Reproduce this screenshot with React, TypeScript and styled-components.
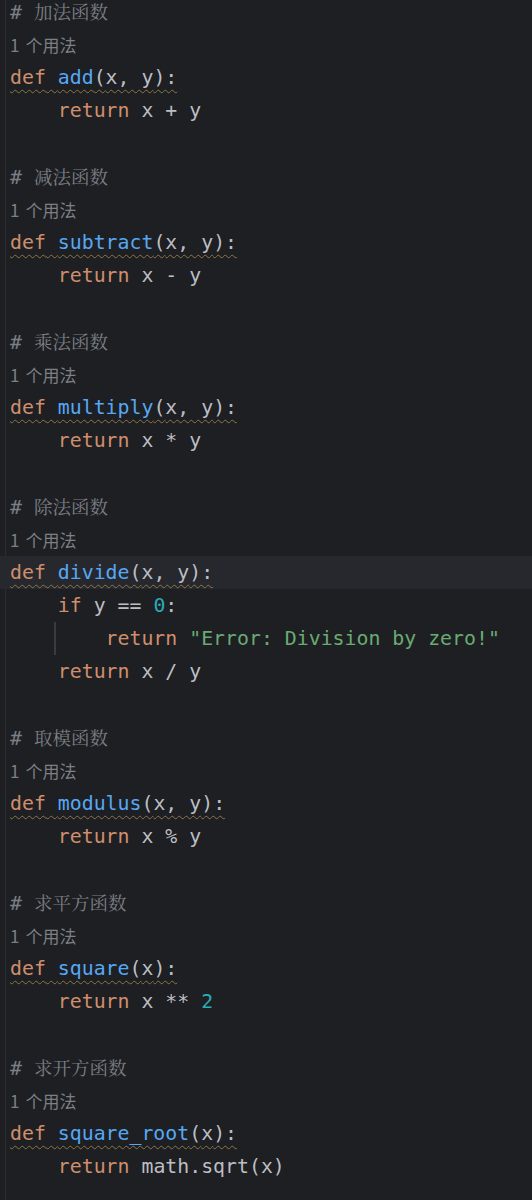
import React from "react";
import styled, { createGlobalStyle } from "styled-components";

const Global = createGlobalStyle`
  html, body { margin: 0; padding: 0; background: #1e1f22; }
  body { overflow: hidden; }
`;

const Editor = styled.div`
  margin-top: -5px;
  width: 532px;
  height: 1210px;
  background: linear-gradient(to right, transparent 5px, #2b2d30 5px, #2b2d30 6px, transparent 6px), #1e1f22;
  font-family: "DejaVu Sans Mono", "Liberation Mono", monospace;
  font-size: 19.85px;
  color: #bcbec4;
`;

const Row = styled.div<{ $current?: boolean }>`
  position: relative;
  height: 33px;
  line-height: 33px;
  padding-left: 10px;
  white-space: pre;
  background: ${(p) => (p.$current ? "#26282e" : "transparent")};
`;

const IndentGuide = styled.span`
  position: absolute;
  left: 54px;
  top: 0;
  bottom: 0;
  width: 2px;
  background: #393b40;
`;

const Kw = styled.span`
  color: #cf8e6d;
`;
const Fn = styled.span`
  color: #56a8f5;
`;
const Num = styled.span`
  color: #2aacb8;
`;
const Str = styled.span`
  color: #6aab73;
`;

const Warn = styled.span`
  text-decoration: underline wavy #8a7648;
  text-decoration-thickness: 1px;
  text-underline-offset: 5px;
  text-decoration-skip-ink: none;
`;

const Comment = styled.span`
  color: #7a7e85;
`;

const CjkComment = styled.span`
  font-family: "Noto Serif CJK SC", "Noto Sans CJK SC", serif;
  font-size: 18.5px;
  color: #7a7e85;
`;

const Hint = styled.span`
  font-family: "Noto Sans CJK SC", "Noto Sans", sans-serif;
  font-size: 17px;
  color: #7c7f86;
`;

const HintCount = styled.span`
  margin-right: 6px;
`;

type Fnc = { comment: string; name: string; args: string; body: React.ReactNode[] };

const funcs: Fnc[] = [
  { comment: "加法函数", name: "add", args: "x, y", body: [<><Kw>    return</Kw> x + y</>] },
  { comment: "减法函数", name: "subtract", args: "x, y", body: [<><Kw>    return</Kw> x - y</>] },
  { comment: "乘法函数", name: "multiply", args: "x, y", body: [<><Kw>    return</Kw> x * y</>] },
  {
    comment: "除法函数",
    name: "divide",
    args: "x, y",
    body: [
      <><Kw>    if</Kw> y == <Num>0</Num>:</>,
      <><IndentGuide /><Kw>        return</Kw> <Str>"Error: Division by zero!"</Str></>,
      <><Kw>    return</Kw> x / y</>,
    ],
  },
  { comment: "取模函数", name: "modulus", args: "x, y", body: [<><Kw>    return</Kw> x % y</>] },
  { comment: "求平方函数", name: "square", args: "x", body: [<><Kw>    return</Kw> x ** <Num>2</Num></>] },
  { comment: "求开方函数", name: "square_root", args: "x", body: [<><Kw>    return</Kw> math.sqrt(x)</>] },
];

export default function App() {
  return (
    <>
      <Global />
      <Editor>
        {funcs.map((f, i) => (
          <React.Fragment key={f.name}>
            {i > 0 && <Row />}
            <Row>
              <Comment># </Comment>
              <CjkComment>{f.comment}</CjkComment>
            </Row>
            <Row>
              <Hint>
                <HintCount>1</HintCount>个用法
              </Hint>
            </Row>
            <Row $current={f.name === "divide"}>
              <Warn>
                <Kw>def</Kw> <Fn>{f.name}</Fn>({f.args}):
              </Warn>
            </Row>
            {f.body.map((b, j) => (
              <Row key={j}>{b}</Row>
            ))}
          </React.Fragment>
        ))}
      </Editor>
    </>
  );
}
